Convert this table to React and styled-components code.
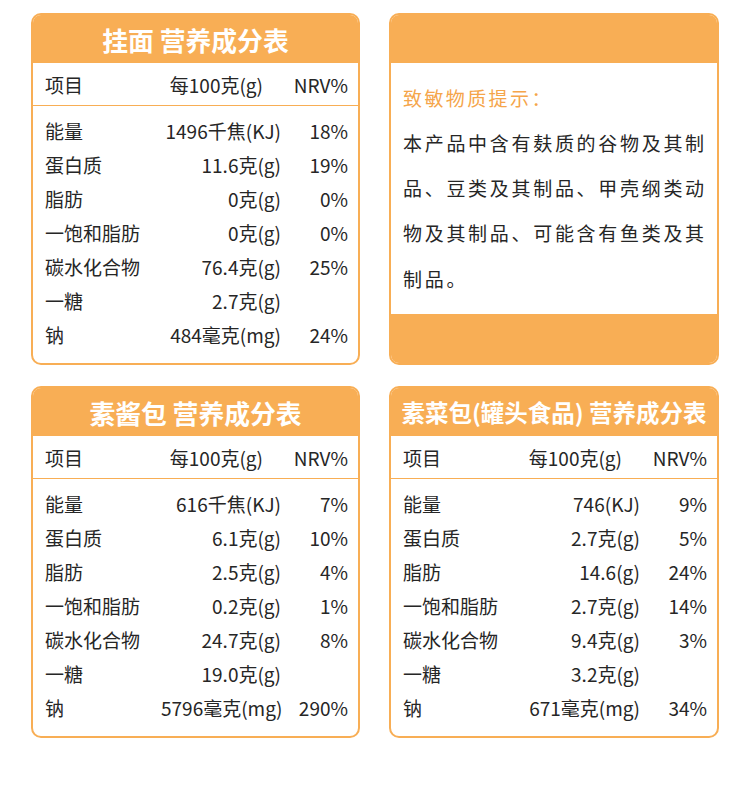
import styled, { createGlobalStyle } from "styled-components";

const ORANGE = "#f8ae55";

const GlobalStyle = createGlobalStyle`
  body {
    margin: 0;
    background: #fff;
    font-family: "Noto Sans CJK SC", "Noto Sans", sans-serif;
    color: #262626;
  }
`;

const Page = styled.div`
  width: 750px;
  height: 789px;
  box-sizing: border-box;
  padding: 13px 0 0 31px;
  display: grid;
  grid-template-columns: 329px 330px;
  grid-template-rows: 352px 352px;
  column-gap: 29px;
  row-gap: 21px;
`;

const Card = styled.div`
  border: 2px solid ${ORANGE};
  border-radius: 10px;
  overflow: hidden;
  background: #fff;
  display: flex;
  flex-direction: column;
  box-sizing: border-box;
`;

const CardHead = styled.div`
  height: 48px;
  flex: none;
  background: ${ORANGE};
  color: #fff;
  font-size: ${(p) => (p.small ? "23.5px" : "25.8px")};
  font-weight: 700;
  display: flex;
  align-items: center;
  justify-content: center;
  white-space: nowrap;
`;

const Row = styled.div`
  display: grid;
  grid-template-columns: 1fr 120px 67px;
  padding: 0 10px 0 12px;
  height: ${(p) => (p.head ? "42px" : "34px")};
  align-items: center;
  font-size: 19px;
  white-space: nowrap;
  border-bottom: ${(p) => (p.head ? `1px solid ${ORANGE}` : "none")};
`;

const Cell = styled.span`
  text-align: ${(p) => (p.right ? "right" : "left")};
  padding-right: ${(p) => (p.shift ? "18px" : "0")};
`;

const Rows = styled.div`
  padding-top: 7px;
`;

const Body = styled.div`
  flex: 1;
  padding: 20px 10px 0 12px;
`;

const Notice = styled.div`
  color: #f5a54a;
  font-size: 19px;
  letter-spacing: 2.4px;
  line-height: 30px;
  margin-bottom: 7px;
`;

const Para = styled.p`
  margin: 0;
  font-size: 19px;
  letter-spacing: 2.7px;
  line-height: 45.2px;
`;

const CardFoot = styled.div`
  height: 49px;
  flex: none;
  background: ${ORANGE};
`;

const tables = [
  {
    title: "挂面 营养成分表",
    rows: [
      ["能量", "1496千焦(KJ)", "18%"],
      ["蛋白质", "11.6克(g)", "19%"],
      ["脂肪", "0克(g)", "0%"],
      ["一饱和脂肪", "0克(g)", "0%"],
      ["碳水化合物", "76.4克(g)", "25%"],
      ["一糖", "2.7克(g)", ""],
      ["钠", "484毫克(mg)", "24%"],
    ],
  },
  {
    title: "素酱包 营养成分表",
    rows: [
      ["能量", "616千焦(KJ)", "7%"],
      ["蛋白质", "6.1克(g)", "10%"],
      ["脂肪", "2.5克(g)", "4%"],
      ["一饱和脂肪", "0.2克(g)", "1%"],
      ["碳水化合物", "24.7克(g)", "8%"],
      ["一糖", "19.0克(g)", ""],
      ["钠", "5796毫克(mg)", "290%"],
    ],
  },
  {
    title: "素菜包(罐头食品) 营养成分表",
    small: true,
    rows: [
      ["能量", "746(KJ)", "9%"],
      ["蛋白质", "2.7克(g)", "5%"],
      ["脂肪", "14.6(g)", "24%"],
      ["一饱和脂肪", "2.7克(g)", "14%"],
      ["碳水化合物", "9.4克(g)", "3%"],
      ["一糖", "3.2克(g)", ""],
      ["钠", "671毫克(mg)", "34%"],
    ],
  },
];

const NutritionCard = ({ title, small, rows }) => (
  <Card>
    <CardHead small={small}>{title}</CardHead>
    <Row head>
      <Cell>项目</Cell>
      <Cell right shift>每100克(g)</Cell>
      <Cell right>NRV%</Cell>
    </Row>
    <Rows>
      {rows.map(([name, value, nrv]) => (
        <Row key={name}>
          <Cell>{name}</Cell>
          <Cell right>{value}</Cell>
          <Cell right>{nrv}</Cell>
        </Row>
      ))}
    </Rows>
  </Card>
);

const AllergenCard = () => (
  <Card>
    <CardHead />
    <Body>
      <Notice>致敏物质提示：</Notice>
      <Para>
        本产品中含有麸质的谷物及其制品、豆类及其制品、甲壳纲类动物及其制品、可能含有鱼类及其制品。
      </Para>
    </Body>
    <CardFoot />
  </Card>
);

export default function App() {
  return (
    <>
      <GlobalStyle />
      <Page>
        <NutritionCard {...tables[0]} />
        <AllergenCard />
        <NutritionCard {...tables[1]} />
        <NutritionCard {...tables[2]} />
      </Page>
    </>
  );
}
